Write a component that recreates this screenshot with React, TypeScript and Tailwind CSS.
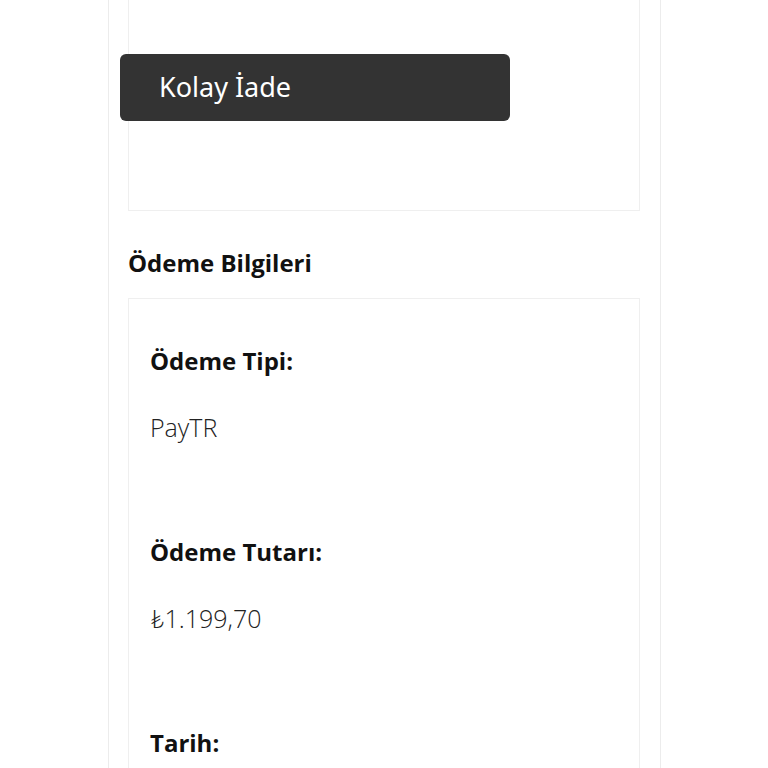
import React from "react";

const rows = [
  { label: "Ödeme Tipi:", value: "PayTR" },
  { label: "Ödeme Tutarı:", value: "₺1.199,70" },
  { label: "Tarih:", value: "" },
];

export default function App() {
  return (
    <div className="relative h-[768px] overflow-hidden bg-white" style={{ fontFamily: "'Open Sans', Lato, sans-serif" }}>
      <div className="flow-root ml-[108px] h-full w-[553px] border-x border-[#ececec] pl-[19px]">
        {/* previous section box, cut off at the top */}
        <div className="-mt-[20px] h-[231px] w-[512px] border border-[#efefef]" />

        <h3 className="mt-[36px] text-[24px] font-bold leading-[32px] text-[#111]">Ödeme Bilgileri</h3>

        <div className="mt-[19px] w-[512px] border border-[#efefef] px-[21px] pt-[46px]">
          {rows.map((row) => (
            <div key={row.label} className="mb-[93px]">
              <div className="text-[24px] font-bold leading-[32px] text-[#111]">{row.label}</div>
              {row.value && (
                <div className="mt-[34px] text-[25px] font-light leading-[32px] text-[#222]">{row.value}</div>
              )}
            </div>
          ))}
        </div>
      </div>

      {/* toast */}
      <div className="absolute left-[120px] top-[54px] flex h-[67px] w-[390px] items-center rounded-[6px] bg-[#333333] pl-[39px]">
        <span className="text-[27px] text-white" style={{ fontFamily: "'Noto Sans', sans-serif" }}>Kolay İade</span>
      </div>
    </div>
  );
}
